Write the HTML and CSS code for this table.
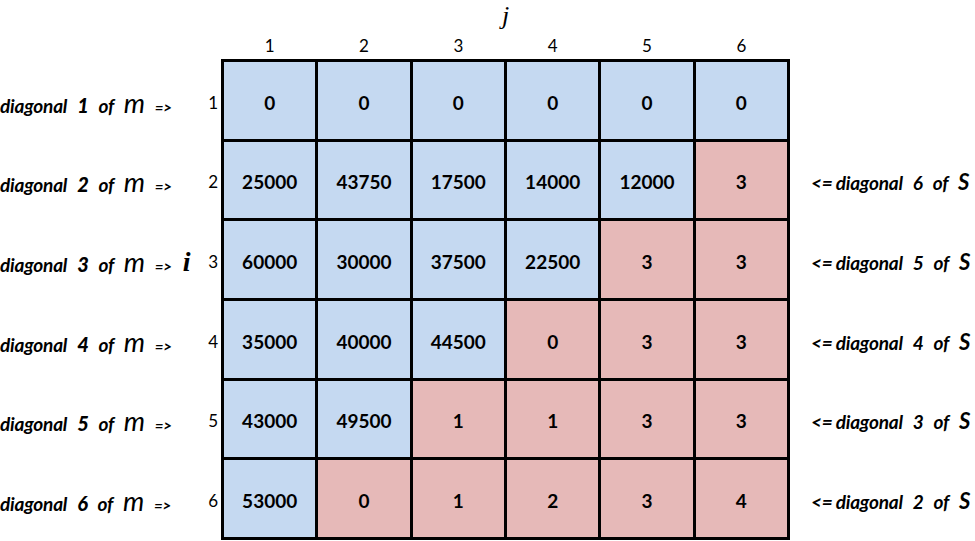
FILE: index.html
```html
<!DOCTYPE html>
<html>
<head>
<meta charset="utf-8">
<link rel="stylesheet" href="styles.css">
</head>
<body>
<div class="page">
  <div class="top">
    <div class="jrow"><span class="j">j</span></div>
    <div class="colnums">
      <span>1</span><span>2</span><span>3</span><span>4</span><span>5</span><span>6</span>
    </div>
  </div>
  <div class="main">
    <div class="left">
      <div class="lrow"><span class="lab">diagonal <b class="n">1</b> of <span class="m">m</span> <span class="arr">=&gt;</span></span><span class="rn">1</span></div>
      <div class="lrow"><span class="lab">diagonal <b class="n">2</b> of <span class="m">m</span> <span class="arr">=&gt;</span></span><span class="rn">2</span></div>
      <div class="lrow"><span class="lab">diagonal <b class="n">3</b> of <span class="m">m</span> <span class="arr">=&gt;</span></span><span class="iv">i</span><span class="rn">3</span></div>
      <div class="lrow"><span class="lab">diagonal <b class="n">4</b> of <span class="m">m</span> <span class="arr">=&gt;</span></span><span class="rn">4</span></div>
      <div class="lrow"><span class="lab">diagonal <b class="n">5</b> of <span class="m">m</span> <span class="arr">=&gt;</span></span><span class="rn">5</span></div>
      <div class="lrow"><span class="lab">diagonal <b class="n">6</b> of <span class="m">m</span> <span class="arr">=&gt;</span></span><span class="rn">6</span></div>
    </div>
    <div class="grid">
      <div class="c b">0</div><div class="c b">0</div><div class="c b">0</div><div class="c b">0</div><div class="c b">0</div><div class="c b">0</div>
      <div class="c b">25000</div><div class="c b">43750</div><div class="c b">17500</div><div class="c b">14000</div><div class="c b">12000</div><div class="c p">3</div>
      <div class="c b">60000</div><div class="c b">30000</div><div class="c b">37500</div><div class="c b">22500</div><div class="c p">3</div><div class="c p">3</div>
      <div class="c b">35000</div><div class="c b">40000</div><div class="c b">44500</div><div class="c p">0</div><div class="c p">3</div><div class="c p">3</div>
      <div class="c b">43000</div><div class="c b">49500</div><div class="c p">1</div><div class="c p">1</div><div class="c p">3</div><div class="c p">3</div>
      <div class="c b">53000</div><div class="c p">0</div><div class="c p">1</div><div class="c p">2</div><div class="c p">3</div><div class="c p">4</div>
    </div>
    <div class="right">
      <div class="rrow"></div>
      <div class="rrow"><span class="rlab"><span class="lt">&lt;=</span>diagonal <span class="n">6</span> of <span class="s">S</span></span></div>
      <div class="rrow"><span class="rlab"><span class="lt">&lt;=</span>diagonal <span class="n">5</span> of <span class="s">S</span></span></div>
      <div class="rrow"><span class="rlab"><span class="lt">&lt;=</span>diagonal <span class="n">4</span> of <span class="s">S</span></span></div>
      <div class="rrow"><span class="rlab"><span class="lt">&lt;=</span>diagonal <span class="n">3</span> of <span class="s">S</span></span></div>
      <div class="rrow"><span class="rlab"><span class="lt">&lt;=</span>diagonal <span class="n">2</span> of <span class="s">S</span></span></div>
    </div>
  </div>
</div>
</body>
</html>
```

FILE: styles.css
```css
html, body {
  margin: 0;
  padding: 0;
  background: #ffffff;
  overflow: hidden;
}
.page {
  width: 975px;
  height: 541px;
  font-family: Lato, "Open Sans", sans-serif;
  color: #000;
}
.top {
  height: 59px;
  padding-left: 221px;
  width: 569px;
  display: flex;
  flex-direction: column;
}
.jrow {
  height: 32px;
  display: flex;
  justify-content: center;
  align-items: flex-start;
}
.j {
  font-family: "Liberation Serif", serif;
  font-style: italic;
  font-size: 26px;
  line-height: 26px;
  margin-top: 3px;
}
.colnums {
  flex: 1;
  display: grid;
  grid-template-columns: repeat(6, 1fr);
  padding: 0 3px;
  column-gap: 3px;
  font-size: 17px;
  align-items: center;
  text-align: center;
}
.main {
  display: flex;
  height: 481px;
}
.left {
  width: 221px;
  flex: none;
  display: grid;
  grid-template-rows: repeat(6, 1fr);
  row-gap: 3px;
  padding: 3px 0;
  box-sizing: border-box;
}
.lrow {
  display: flex;
  align-items: center;
  padding-top: 4px;
  white-space: nowrap;
}
.lab {
  font-style: italic;
  font-weight: 700;
  font-size: 19px;
  letter-spacing: -0.2px;
  word-spacing: 6px;
}
.lab .n { font-size: 20px; }
.m {
  font-size: 27px;
  font-weight: 400;
  font-style: italic;
}
.arr {
  font-size: 15px;
  font-weight: 700;
  word-spacing: 0;
}
.iv {
  font-family: "Liberation Serif", serif;
  font-style: italic;
  font-weight: 700;
  font-size: 28px;
  margin-left: 11px;
}
.rn {
  margin-left: auto;
  padding-right: 3px;
  font-size: 17px;
}
.grid {
  width: 569px;
  flex: none;
  display: grid;
  grid-template-columns: repeat(6, 1fr);
  grid-template-rows: repeat(6, 1fr);
  gap: 3px;
  padding: 3px;
  box-sizing: border-box;
  background: #000;
}
.c {
  display: flex;
  align-items: center;
  justify-content: center;
  font-weight: 700;
  font-size: 19px;
  padding-top: 4px;
}
.c.b { background: #c5d9f1; }
.c.p { background: #e6b9b8; }
.right {
  flex: 1;
  display: grid;
  grid-template-rows: repeat(6, 1fr);
  row-gap: 3px;
  padding: 3px 0 3px 21px;
  box-sizing: border-box;
  overflow: hidden;
}
.rrow {
  display: flex;
  align-items: center;
  padding-top: 4px;
  white-space: nowrap;
}
.rlab {
  font-style: italic;
  font-weight: 700;
  font-size: 19px;
  letter-spacing: -0.2px;
  word-spacing: 6px;
}
.lt { margin-right: 3px; }
.s { font-size: 22px; }
```
